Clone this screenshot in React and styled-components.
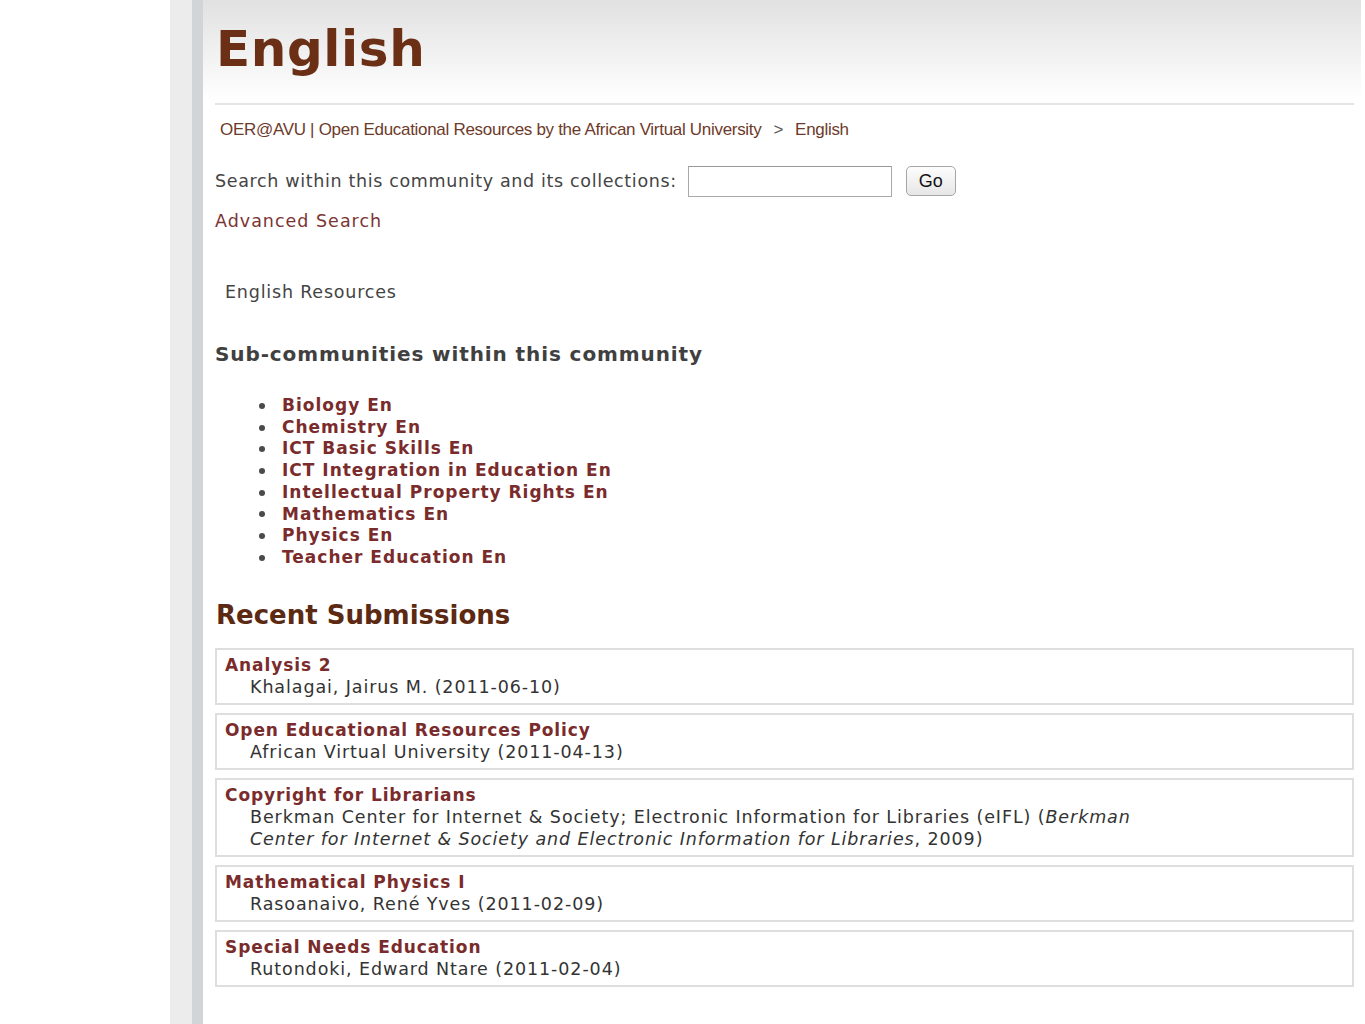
import React from 'react';
import styled, { createGlobalStyle } from 'styled-components';

const GlobalStyle = createGlobalStyle`
  html, body {
    margin: 0;
    padding: 0;
    background: #fff;
  }
  body {
    font-family: "DejaVu Sans", Verdana, sans-serif;
    color: #444;
  }
`;

const subCommunities = [
  'Biology En',
  'Chemistry En',
  'ICT Basic Skills En',
  'ICT Integration in Education En',
  'Intellectual Property Rights En',
  'Mathematics En',
  'Physics En',
  'Teacher Education En',
];

const submissions = [
  { title: 'Analysis 2', meta: <>Khalagai, Jairus M. (2011-06-10)</> },
  { title: 'Open Educational Resources Policy', meta: <>African Virtual University (2011-04-13)</> },
  {
    title: 'Copyright for Librarians',
    meta: (
      <>
        Berkman Center for Internet &amp; Society; Electronic Information for Libraries (eIFL) (
        <em>Berkman Center for Internet &amp; Society and Electronic Information for Libraries</em>, 2009)
      </>
    ),
  },
  { title: 'Mathematical Physics I', meta: <>Rasoanaivo, René Yves (2011-02-09)</> },
  { title: 'Special Needs Education', meta: <>Rutondoki, Edward Ntare (2011-02-04)</> },
];

const App = () => {
  return (
    <>
      <GlobalStyle />
      <Page>
        <Gutter />
        <SideStrip />
        <SideEdge />
        <Main>
          <Header>
            <Title>English</Title>
          </Header>
          <Content>
            <Rule />
            <Breadcrumb>
              <Crumb>OER@AVU | Open Educational Resources by the African Virtual University</Crumb>
              <Sep>&gt;</Sep>
              <Crumb>English</Crumb>
            </Breadcrumb>
            <SearchRow>
              <SearchLabel>Search within this community and its collections:</SearchLabel>
              <SearchInput type="text" />
              <GoButton>Go</GoButton>
            </SearchRow>
            <AdvancedLink href="#">Advanced Search</AdvancedLink>
            <Intro>English Resources</Intro>
            <SubHeading>Sub-communities within this community</SubHeading>
            <SubList>
              {subCommunities.map((name) => (
                <SubItem key={name}>
                  <Bullet />
                  <SubLink href="#">{name}</SubLink>
                </SubItem>
              ))}
            </SubList>
            <RecentHeading>Recent Submissions</RecentHeading>
            <SubmissionList>
              {submissions.map((s) => (
                <Submission key={s.title}>
                  <SubmissionTitle href="#">{s.title}</SubmissionTitle>
                  <SubmissionMeta>{s.meta}</SubmissionMeta>
                </Submission>
              ))}
            </SubmissionList>
          </Content>
        </Main>
      </Page>
    </>
  );
};

export default App;

const Page = styled.div`
  display: flex;
  min-height: 1024px;
`;

const Gutter = styled.div`
  width: 170px;
  flex-shrink: 0;
  background: #fff;
`;

const SideStrip = styled.div`
  width: 22px;
  flex-shrink: 0;
  background: #ececec;
`;

const SideEdge = styled.div`
  width: 11px;
  flex-shrink: 0;
  background: #d2d5d8;
`;

const Main = styled.div`
  width: 1158px;
  flex-shrink: 0;
  background: #fff;
`;

const Header = styled.div`
  height: 100px;
  padding-left: 13px;
  background: linear-gradient(#e1e1e1, #ffffff);
  box-sizing: border-box;
`;

const Title = styled.h1`
  margin: 0;
  padding-top: 19px;
  font-family: "DejaVu Sans", Verdana, sans-serif;
  font-size: 50px;
  font-weight: bold;
  color: #6b2f16;
  letter-spacing: 0.6px;
  line-height: 1.2;
`;

const Content = styled.div`
  padding: 0 7px 0 12px;
`;

const Rule = styled.div`
  height: 2px;
  margin-top: 3px;
  background: #e4e4e4;
`;

const Breadcrumb = styled.div`
  display: flex;
  gap: 12px;
  margin-top: 15px;
  padding-left: 5px;
  font-family: "Liberation Sans", Arial, sans-serif;
  font-size: 17px;
  letter-spacing: -0.3px;
  color: #6d3a2a;
  line-height: 20px;
`;

const Crumb = styled.span``;

const Sep = styled.span`
  color: #555;
`;

const SearchRow = styled.div`
  display: flex;
  align-items: center;
  margin-top: 25px;
  height: 32px;
`;

const SearchLabel = styled.span`
  font-size: 17.5px;
  color: #444;
  letter-spacing: 0.65px;
`;

const SearchInput = styled.input`
  width: 204px;
  height: 31px;
  box-sizing: border-box;
  margin-left: 11px;
  border: 1px solid #a9a9a9;
  border-top-color: #999;
  background: #fff;
`;

const GoButton = styled.button`
  margin-left: 14px;
  width: 50px;
  height: 30px;
  border: 1px solid #a6a6a6;
  border-radius: 5px;
  background: linear-gradient(#fdfdfd, #e6e6e6);
  font-family: "Liberation Sans", Arial, sans-serif;
  font-size: 18px;
  color: #111;
  padding: 0;
`;

const AdvancedLink = styled.a`
  display: block;
  margin-top: 14px;
  font-size: 17.5px;
  letter-spacing: 1px;
  color: #7b3434;
  text-decoration: none;
  line-height: 20px;
`;

const Intro = styled.p`
  margin: 51px 0 0 10px;
  font-size: 17.5px;
  letter-spacing: 0.8px;
  color: #444;
  line-height: 20px;
`;

const SubHeading = styled.h2`
  margin: 40px 0 0;
  font-size: 20px;
  font-weight: bold;
  letter-spacing: 0.9px;
  color: #404040;
  line-height: 24px;
`;

const SubList = styled.ul`
  margin: 29px 0 0;
  padding-left: 44px;
  list-style: none;
`;

const SubItem = styled.li`
  display: flex;
  align-items: center;
  font-size: 17px;
  line-height: 21.7px;
`;

const Bullet = styled.span`
  width: 6px;
  height: 6px;
  border-radius: 50%;
  background: #4a4a4a;
  margin-right: 17px;
  flex-shrink: 0;
`;

const SubLink = styled.a`
  font-weight: bold;
  letter-spacing: 1px;
  color: #7a2b2b;
  text-decoration: none;
`;

const RecentHeading = styled.h2`
  margin: 31px 0 0 1px;
  font-size: 26px;
  font-weight: bold;
  color: #5c2a12;
  line-height: 30px;
`;

const SubmissionList = styled.div`
  display: flex;
  flex-direction: column;
  gap: 8px;
  margin-top: 18px;
`;

const Submission = styled.div`
  border: 2px solid #dedede;
  padding: 4px 8px 5px;
`;

const SubmissionTitle = styled.a`
  display: block;
  font-size: 17px;
  font-weight: bold;
  letter-spacing: 0.9px;
  line-height: 22px;
  color: #7a2b2b;
  text-decoration: none;
`;

const SubmissionMeta = styled.div`
  padding-left: 25px;
  max-width: 905px;
  font-size: 17.5px;
  letter-spacing: 0.9px;
  line-height: 22px;
  color: #333;

  em {
    font-style: italic;
  }
`;
